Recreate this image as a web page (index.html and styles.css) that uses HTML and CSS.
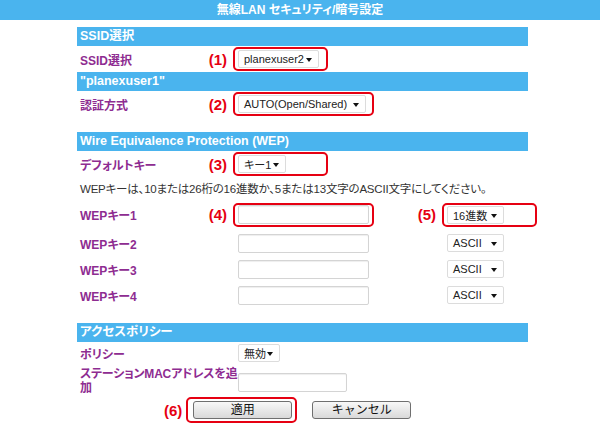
FILE: index.html
```html
<!DOCTYPE html>
<html lang="ja">
<head>
    <meta charset="UTF-8">
    <title>無線LAN セキュリティ/暗号設定</title>
    <link rel="stylesheet" href="styles.css">
</head>
<body>
    <div class="titlebar">無線LAN セキュリティ/暗号設定</div>

    <div class="panel">
        <div class="group">
            <div class="group-head">SSID選択</div>
            <div class="row">
                <div class="label">SSID選択</div>
                <div class="mark">(1)</div>
                <div class="field marked w95"><span class="select w80">planexuser2<i class="caret"></i></span></div>
            </div>
            <div class="group-head">"planexuser1"</div>
            <div class="row">
                <div class="label">認証方式</div>
                <div class="mark">(2)</div>
                <div class="field marked w141"><span class="select w128">AUTO(Open/Shared)<i class="caret"></i></span></div>
            </div>
        </div>

        <div class="group">
            <div class="group-head">Wire Equivalence Protection (WEP)</div>
            <div class="row">
                <div class="label">デフォルトキー</div>
                <div class="mark">(3)</div>
                <div class="field marked w95"><span class="select w48">キー1<i class="caret"></i></span></div>
            </div>
            <p class="note">WEPキーは、10または26桁の16進数か、5または13文字のASCII文字にしてください。</p>
            <div class="row key first">
                <div class="label">WEPキー1</div>
                <div class="mark">(4)</div>
                <div class="field marked w141"><span class="textbox"></span></div>
                <div class="mark mark-wide">(5)</div>
                <div class="field marked w95"><span class="select w57">16進数<i class="caret"></i></span></div>
            </div>
            <div class="row key">
                <div class="label">WEPキー2</div>
                <div class="mark"></div>
                <div class="field w141"><span class="textbox"></span></div>
                <div class="mark mark-wide"></div>
                <div class="field w95"><span class="select w57">ASCII<i class="caret"></i></span></div>
            </div>
            <div class="row key">
                <div class="label">WEPキー3</div>
                <div class="mark"></div>
                <div class="field w141"><span class="textbox"></span></div>
                <div class="mark mark-wide"></div>
                <div class="field w95"><span class="select w57">ASCII<i class="caret"></i></span></div>
            </div>
            <div class="row key">
                <div class="label">WEPキー4</div>
                <div class="mark"></div>
                <div class="field w141"><span class="textbox"></span></div>
                <div class="mark mark-wide"></div>
                <div class="field w95"><span class="select w57">ASCII<i class="caret"></i></span></div>
            </div>
        </div>

        <div class="group">
            <div class="group-head">アクセスポリシー</div>
            <div class="row short">
                <div class="label">ポリシー</div>
                <div class="mark"></div>
                <div class="field plain"><span class="select w42">無効<i class="caret"></i></span></div>
            </div>
            <div class="row tall">
                <div class="label label-wrap"><span class="nowrap">ステーションMACアドレスを追</span><br>加</div>
                <div class="field plain"><span class="textbox w109"></span></div>
            </div>
            <div class="buttons">
                <div class="mark">(6)</div>
                <div class="btn-box"><button class="btn">適用</button></div>
                <button class="btn">キャンセル</button>
            </div>
        </div>
    </div>
</body>
</html>
```

FILE: styles.css
```css
body { margin: 0; background: #fff; font-family: "Liberation Sans", "Noto Sans CJK JP", sans-serif; font-size: 12px; color: #333; font-feature-settings: "palt"; }

.titlebar { height: 20px; line-height: 20px; background: #4ab4ee; color: #fff; font-weight: bold; font-size: 12px; text-align: center; }

.panel { width: 451px; margin: 7px 0 0 77px; }
.group { margin-bottom: 15px; }
.group-head { height: 19px; line-height: 19px; background: #4ab4ee; color: #fff; font-weight: bold; font-size: 12.5px; padding-left: 3px; }

.row { display: flex; align-items: center; height: 26px; }
.row.first { height: 27px; margin-bottom: 2px; }
.row.short { height: 22px; }
.row.tall { height: 32px; align-items: flex-start; }

.label { width: 117px; flex-shrink: 0; padding-left: 3px; color: #8e2c91; font-weight: bold; font-size: 12px; }
.label-wrap { width: 153px; line-height: 14px; padding-top: 3px; }
.nowrap { white-space: nowrap; letter-spacing: -0.2px; }
.row.tall .field { margin-top: 6px; }

.mark { width: 30px; flex-shrink: 0; padding-right: 6px; text-align: right; color: #e60012; font-weight: bold; font-size: 15px; }
.mark-wide { width: 62px; }

.field { box-sizing: border-box; height: 24px; padding: 0 3px; border: 2px solid transparent; border-radius: 5px; display: flex; align-items: center; flex-shrink: 0; }
.field.marked { border-color: #e60012; }
.field.plain { border: 0; padding: 0 0 0 5px; }
.w95 { width: 95px; }
.w141 { width: 141px; }

.select { box-sizing: border-box; height: 18px; display: inline-flex; align-items: center; padding: 0 5px; border: 1px solid #dcdcdc; border-radius: 2px; background: #fff; color: #222; font-size: 11px; position: relative; }
.caret { position: absolute; right: 6px; top: 7px; width: 0; height: 0; border-left: 3px solid transparent; border-right: 3px solid transparent; border-top: 4px solid #111; }
.w42 { width: 42px; }
.w48 { width: 48px; }
.w57 { width: 57px; }
.w80 { width: 81px; }
.w128 { width: 128px; }

.textbox { box-sizing: border-box; width: 131px; height: 19px; border: 1px solid #d4d4d4; border-radius: 2px; background: #fff; box-shadow: inset 0 1px 1px #eee; }
.textbox.w109 { width: 109px; }

.note { margin: 0; height: 24px; line-height: 24px; padding-left: 3px; color: #333; font-size: 11.5px; white-space: nowrap; letter-spacing: -0.2px; }

.buttons { display: flex; align-items: center; height: 28px; padding-left: 87px; }
.buttons .mark { width: auto; padding-right: 4px; }
.btn-box { box-sizing: border-box; height: 26px; padding: 0 3px 0 5px; border: 2px solid #e60012; border-radius: 5px; display: flex; align-items: center; margin-right: 15px; }
.btn { width: 99px; height: 18px; padding: 0; border: 1px solid #6f6f6f; border-radius: 3px; background: linear-gradient(#f8f8f8, #d9d9d9); font-family: inherit; font-size: 12px; color: #111; line-height: 16px; }
```
